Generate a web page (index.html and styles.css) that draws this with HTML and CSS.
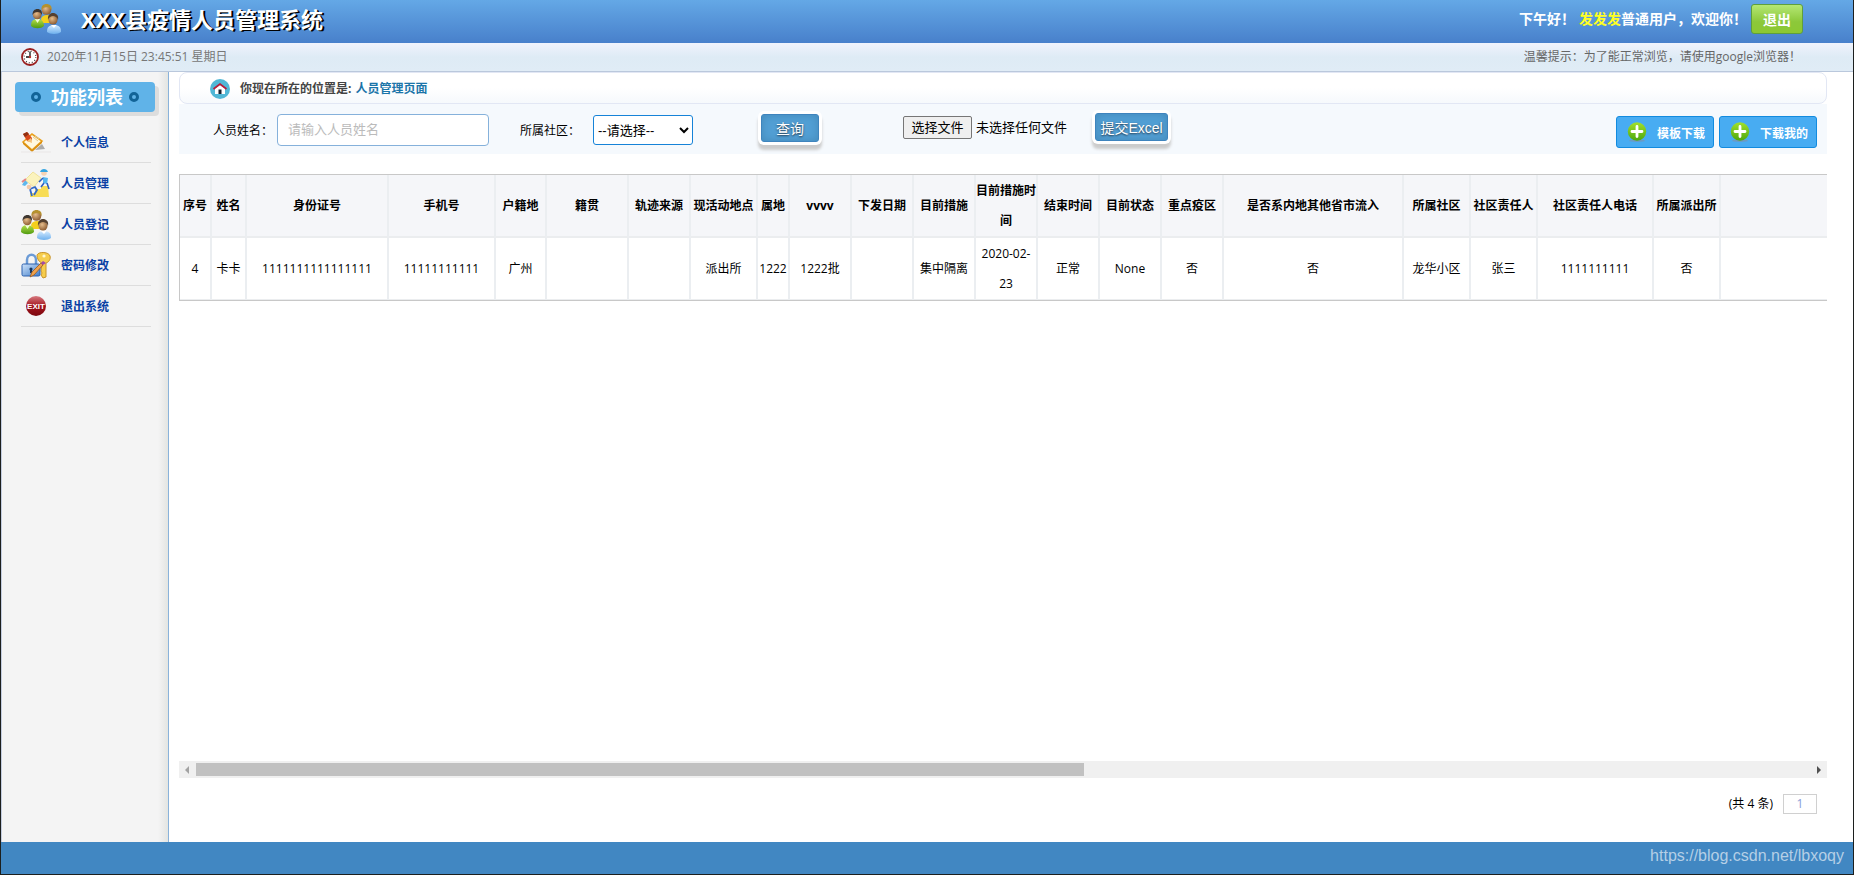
FILE: index.html
```html
<!DOCTYPE html>
<html lang="zh-CN">
<head>
<meta charset="utf-8">
<title>XXX县疫情人员管理系统</title>
<link rel="stylesheet" href="styles.css">
</head>
<body>
<svg class="defs" aria-hidden="true">
  <defs>
    <radialGradient id="face" cx=".4" cy=".35" r=".7"><stop offset="0" stop-color="#e6bd8c"/><stop offset="1" stop-color="#87562c"/></radialGradient>
    <linearGradient id="shirtGreen" x2="0" y2="1"><stop offset="0" stop-color="#b6e04a"/><stop offset="1" stop-color="#4f9a10"/></linearGradient>
    <linearGradient id="shirtBlue" x2="0" y2="1"><stop offset="0" stop-color="#d4ebff"/><stop offset="1" stop-color="#6fb1ee"/></linearGradient>
    <linearGradient id="lockBlue" x2="1" y2="1"><stop offset="0" stop-color="#cfe4fb"/><stop offset="1" stop-color="#3f7cc8"/></linearGradient>
    <linearGradient id="plusGreen" x2="0" y2="1"><stop offset="0" stop-color="#a2e02c"/><stop offset="1" stop-color="#4da80e"/></linearGradient>
    <linearGradient id="exitRed" x2="0" y2="1"><stop offset="0" stop-color="#d77a80"/><stop offset=".5" stop-color="#a3151d"/><stop offset="1" stop-color="#7c070e"/></linearGradient>
    <symbol id="people" viewBox="0 0 30 30">
      <path d="M10 15c1-3 3-4 6-4s5 2 6 5l-4 3h-7z" fill="#f5cf1c"/>
      <circle cx="15.500" cy="6" r="4.800" fill="url(#face)"/>
      <path d="M10.500 6c-.5-4 2-6 5-6s6 2 5 6c-1-2-3-3-5-3s-4 1-5 3z" fill="#b5912f"/>
      <path d="M0 22c0-5 2-7 6-7s7 2 7 7c-3 3-10 3-13 0z" fill="url(#shirtGreen)"/>
      <path d="M4 15l2.500 4L9 15z" fill="#f3ffd8"/>
      <circle cx="6.200" cy="11" r="4.300" fill="url(#face)"/>
      <path d="M1.500 11c0-4 2-6 5-6s5 2 4.500 6c-1-2-2-3-4.500-3s-4 1-5 3z" fill="#3e3630"/>
      <path d="M16 28c0-5 2-7 7-7s7 2 7 7c-3 2.500-11 2.500-14 0z" fill="url(#shirtBlue)"/>
      <path d="M20 21l3 3 2.500-3z" fill="#fff"/>
      <circle cx="22" cy="16" r="4.500" fill="url(#face)"/>
      <path d="M17 16c-.5-5 2-7 5-7s6 2 5 7c-1-3-3-4-5-4s-4 1-5 4z" fill="#55402f"/>
    </symbol>
    <symbol id="plus" viewBox="0 0 20 20">
      <ellipse cx="10" cy="18.700" rx="8" ry="1.200" fill="#6c9ac4"/>
      <circle cx="10" cy="9.500" r="9.200" fill="url(#plusGreen)"/>
      <path d="M10 4.500v10M5 9.500h10" stroke="#fff" stroke-width="2.800" stroke-linecap="round"/>
    </symbol>
  </defs>
</svg>

<header class="topbar">
  <svg class="logo"><use href="#people"/></svg>
  <h1 class="site-name">XXX县疫情人员管理系统</h1>
  <div class="welcome"><span>下午好！</span><span><span class="user">发发发</span>普通用户，欢迎你！</span></div>
  <button class="logout" type="button">退出</button>
</header>

<div class="infobar">
  <svg class="clock" viewBox="0 0 18 18" aria-hidden="true">
    <circle cx="9" cy="9" r="8" fill="#fff" stroke="#9a2020" stroke-width="1.800"/>
    <circle cx="9" cy="9" r="5.800" fill="none" stroke="#444" stroke-width="1.200" stroke-dasharray="1 2.040"/>
    <path d="M9 3.500V9H5" fill="none" stroke="#111" stroke-width="1.300"/><circle cx="9" cy="9" r="1.200" fill="#b33"/>
  </svg>
  <time>2020年11月15日 23:45:51 星期日</time>
  <span class="tip">温馨提示：为了能正常浏览，请使用google浏览器！</span>
</div>

<div class="body">
  <nav class="sidebar">
    <h2 class="menu-title"><i class="ring"></i>功能列表<i class="ring"></i></h2>
    <ul class="menu">
      <li><a href="#info">
        <svg viewBox="0 0 30 30"><path d="M14 22l10-1-3-5z" fill="#999" opacity=".8"/><path d="M2 14L11 6l10 7-10 9z" fill="#fff8df" stroke="#e9a01c" stroke-width="1.600"/><path d="M2 14l9 8 10-9v2l-10 9-9-8z" fill="#d98e10"/><path d="M12 9l5 4M14 8l4 3" stroke="#dcc99a"/><path d="M2 6l4-2 5 6-1 4-4-1z" fill="#d9481c"/><path d="M2 6l4-2 2 2-4 3z" fill="#8f3013"/><path d="M6 13l4-3 1 5z" fill="#f4c478"/><path d="M0 24h30" stroke="#e9e6e6"/></svg>
        个人信息</a></li>
      <li><a href="#people-list">
        <svg viewBox="0 0 30 30"><path d="M9 28v-4h5v-4h6v-3h7l1 11z" fill="#f7dc55"/><path d="M4 11L12 3l8 6-7 9z" fill="#fbf3bd" stroke="#f0e29a"/><path d="M1 16l3-5 3 3-3 3z" fill="#5db8ee"/><path d="M1 13l4-3" stroke="#e58383" stroke-width="2"/><path d="M9 20l5-2 2 3-3 5M9 20l2 7" fill="none" stroke="#3269c9" stroke-width="1.800"/><circle cx="8" cy="18" r="2.300" fill="#f3c9a8"/><circle cx="23" cy="4" r="2.800" fill="#f6d3b4"/><path d="M19 3c1-4 7-4 8 0z" fill="#36a5e2"/><path d="M22 8l5 1-1 6-4-1z" fill="#55b6ef"/><path d="M22 9l-4 4M23 14l-3 4M26 14l2 6" fill="none" stroke="#2e5fc0" stroke-width="1.600"/></svg>
        人员管理</a></li>
      <li><a href="#register"><svg><use href="#people"/></svg>人员登记</a></li>
      <li><a href="#password">
        <svg viewBox="0 0 30 30"><path d="M16 4c2-4 12-3 13 1 1 3-1 6-4 7v14l-3 1-2-3 1-2-1-2 1-8c-3-1-5-4-5-8z" fill="#f6cd4c" stroke="#c9942a"/><circle cx="23" cy="5" r="1.600" fill="#fff6cf"/><path d="M6 14V9c0-7 9-7 9 0v5" fill="none" stroke="#6b9bd6" stroke-width="2.500"/><rect x="1" y="13" width="18" height="12" rx="1.500" fill="url(#lockBlue)" stroke="#2c61ae"/><circle cx="10" cy="18" r="1.600" fill="#16365f"/><path d="M9 18h2v4H9z" fill="#16365f"/><path d="M9 26l2-5 9-9 2 2-9 10z" fill="#f0a24c" stroke="#9a5b1c" stroke-width=".8"/><path d="M20 12l2-2 3 2-3 2z" fill="#a34ba8"/></svg>
        密码修改</a></li>
      <li><a href="#exit">
        <svg viewBox="0 0 30 30"><circle cx="15" cy="14" r="10" fill="url(#exitRed)"/><text class="exit-text" x="15" y="17" text-anchor="middle">EXIT</text></svg>
        退出系统</a></li>
    </ul>
  </nav>

  <main class="content">
    <div class="crumb">
      <svg class="home" viewBox="0 0 20 20" aria-hidden="true"><circle cx="10" cy="10" r="10" fill="#50b7d6"/><path d="M5 9.500L10 6l5 3.500V15H5z" fill="#fff"/><rect x="8.500" y="10.500" width="3" height="4.500" fill="#18202c"/><path d="M3.500 10L10 5l6.500 5" fill="none" stroke="#b91c38" stroke-width="1.700"/></svg>
      <span>你现在所在的位置是:</span>
      <a href="#people-list">人员管理页面</a>
    </div>

    <form class="search">
      <label for="name" class="field-label">人员姓名：</label>
      <input id="name" class="name-input" type="text" placeholder="请输入人员姓名">
      <label for="area" class="field-label area-label">所属社区：</label>
      <select id="area" class="area-select"><option>--请选择--</option></select>
      <button type="button" class="raised query">查询</button>
      <label class="file"><input type="file" class="file-input"><span class="file-btn">选择文件</span>未选择任何文件</label>
      <button type="button" class="raised excel">提交Excel</button>
      <div class="downloads">
        <button type="button" class="download"><svg><use href="#plus"/></svg>模板下载</button>
        <button type="button" class="download"><svg><use href="#plus"/></svg>下载我的</button>
      </div>
    </form>

    <div class="table-wrap" id="records">
      <table class="records">
        <colgroup>
          <col class="c-no"><col class="c-name"><col class="c-id"><col class="c-phone"><col class="c-home"><col class="c-origin"><col class="c-std"><col class="c-wide"><col class="c-no"><col class="c-std"><col class="c-std"><col class="c-std"><col class="c-std"><col class="c-std"><col class="c-std"><col class="c-std"><col class="c-inflow"><col class="c-wide"><col class="c-wide"><col class="c-tel"><col class="c-wide"><col class="c-rest">
        </colgroup>
        <thead><tr><th>序号</th><th>姓名</th><th>身份证号</th><th>手机号</th><th>户籍地</th><th>籍贯</th><th>轨迹来源</th><th>现活动地点</th><th>属地</th><th>vvvv</th><th>下发日期</th><th>目前措施</th><th>目前措施时间</th><th>结束时间</th><th>目前状态</th><th>重点疫区</th><th>是否系内地其他省市流入</th><th>所属社区</th><th>社区责任人</th><th>社区责任人电话</th><th>所属派出所</th><th></th></tr></thead>
        <tbody><tr><td>4</td><td>卡卡</td><td>1111111111111111</td><td>11111111111</td><td>广州</td><td></td><td></td><td>派出所</td><td>1222</td><td>1222批</td><td></td><td>集中隔离</td><td>2020-02-23</td><td>正常</td><td>None</td><td>否</td><td>否</td><td>龙华小区</td><td>张三</td><td>1111111111</td><td>否</td><td></td></tr></tbody>
      </table>
    </div>
    <div class="scrollbar" role="scrollbar" aria-controls="records" aria-orientation="horizontal" aria-valuenow="0">
      <i class="arrow left"></i><div class="track"><div class="thumb"></div></div><i class="arrow right"></i>
    </div>
    <div class="pager"><span>(共 4 条)</span><a href="#page1" class="page">1</a></div>
  </main>
</div>

<footer class="footer">https://blog.csdn.net/lbxoqy</footer>
</body>
</html>
```

FILE: styles.css
```css
* { box-sizing: border-box; }
body {
  margin: 0;
  min-height: 100vh;
  display: flex;
  flex-direction: column;
  border: 1px solid #1c1f1e;
  border-top: 0;
  background: #fff;
  color: #000;
  font: 12px/18px "Open Sans", "Noto Sans CJK SC", sans-serif;
}
button, input, select { font-family: "Liberation Sans", "Noto Sans CJK SC", sans-serif; }
a { text-decoration: none; }
.defs { position: absolute; width: 0; height: 0; }

.topbar {
  display: flex;
  align-items: center;
  height: 43px;
  padding: 0 50px 5px 30px;
  background: linear-gradient(#64a8e6, #4880cb);
  color: #fff;
}
.logo { width: 30px; height: 30px; }
.site-name {
  margin: 0 auto 0 20px;
  font-size: 22px;
  line-height: 32px;
  text-shadow: 2px 1px 0 #000;
}
.welcome { display: flex; gap: 4px; font-size: 14px; font-weight: bold; }
.user { color: #ff2; }
.logout {
  width: 52px;
  height: 30px;
  margin-left: 4px;
  padding: 0;
  border: 1px solid #5f9f3c;
  border-radius: 3px;
  background: linear-gradient(#b4e774, #8cc83a 60%, #8cc832);
  color: #fff;
  font-size: 14px;
  font-weight: bold;
}

.infobar {
  display: flex;
  align-items: center;
  height: 29px;
  padding: 0 52px 0 20px;
  border-bottom: 1px solid #bac8dc;
  background: linear-gradient(#f0f3fc, #deebf5 50%, #e0ecf6);
  color: #777;
}
.clock { width: 18px; height: 18px; margin-right: 8px; }
.tip { margin-left: auto; color: #666; }

.body { flex: 1; display: flex; min-height: 0; }
.sidebar {
  flex: none;
  width: 168px;
  padding: 10px 13px;
  border-left: 1px solid #c3cde0;
  border-right: 1px solid #8ab2da;
  background: linear-gradient(to right, #f4f4f4 156px, #ececeb 161px, #e3e5e2);
}
.menu-title {
  display: flex;
  align-items: center;
  justify-content: center;
  gap: 8px;
  width: 140px;
  height: 30px;
  margin: 0;
  border-radius: 4px;
  background: #60b3e8;
  box-shadow: 4px 4px 0 #ddd;
  color: #fff;
  font-size: 18px;
  line-height: 30px;
}
.ring { width: 10px; height: 10px; border: 3px solid #126498; border-radius: 50%; }
.ring:first-child { margin-right: 2px; }
.ring:last-child { margin-left: -2px; }
.menu { margin: 10px 4px 10px 6px; padding: 0; list-style: none; }
.menu li { height: 41px; border-bottom: 1px solid #ddd; }
.menu a {
  display: flex;
  align-items: center;
  gap: 10px;
  height: 40px;
  padding-top: 2px;
  color: #0a41a4;
  font-weight: bold;
}
.menu svg { width: 30px; height: 30px; }
.exit-text { fill: #fff; font: bold 8px "Liberation Sans", sans-serif; }

.content { flex: 1; min-width: 0; display: flex; flex-direction: column; padding: 0 26px 28px 10px; }
.crumb {
  display: flex;
  align-items: center;
  gap: 4px;
  height: 32px;
  padding: 2px 0 0 30px;
  border: 1px solid #e2e7f4;
  border-radius: 8px;
  background: linear-gradient(#fff 50%, #f6f9fc);
  color: #444;
  font-weight: bold;
}
.crumb a { color: #1b75a9; }
.home { width: 20px; height: 20px; margin-right: 6px; }

.search {
  display: flex;
  align-items: flex-start;
  min-height: 50px;
  padding: 9px 10px 0 34px;
  background: #f5f9fd;
}
.field-label { flex: none; width: 60px; margin: 9px 4px 0 0; }
.area-label { margin-left: 31px; margin-right: 13px; }
.name-input {
  width: 212px;
  height: 32px;
  margin-top: 1px;
  padding: 0 10px 2px;
  border: 1px solid #85b1db;
  border-radius: 4px;
  background: #fff;
  font-size: 13px;
}
.name-input::placeholder { color: #bbb; }
.area-select {
  width: 100px;
  height: 30px;
  margin-top: 2px;
  border: 1px solid #1683d8;
  border-radius: 3px;
  background: #fff;
  color: #000;
  font-size: 13px;
}
.raised {
  height: 28px;
  padding: 0;
  border: 1px solid #3f84bd;
  border-radius: 3px;
  background: #529fd4;
  box-shadow: 0 0 0 3px #fff, 0 5px 3px 3px #ccc, inset 0 0 8px #4389b9;
  color: #fff;
  font-size: 14px;
  text-shadow: 0 1px 2px #234;
}
.query { width: 58px; margin: 1px 0 0 68px; }
.excel { width: 73px; margin-left: 28px; }
.file {
  display: flex;
  align-items: center;
  gap: 4px;
  margin: 3px 0 0 84px;
  font: 13px/21px "Liberation Sans", "Noto Sans CJK SC", sans-serif;
}
.file-input { position: absolute; width: 1px; height: 1px; opacity: 0; }
.file-btn { width: 69px; border: 1px solid #767676; border-radius: 2px; background: #efefef; text-align: center; }
.downloads { display: flex; gap: 5px; margin: 3px 0 0 auto; }
.download {
  display: flex;
  align-items: center;
  gap: 10px;
  width: 98px;
  height: 32px;
  padding: 0 0 0 10px;
  border: 1px solid #128bdf;
  border-radius: 3px;
  background: #48acf2;
  color: #fff;
  font-size: 12px;
  font-weight: bold;
}
.download svg { width: 20px; height: 20px; }

.table-wrap { flex: 1; margin-top: 20px; overflow: hidden; }
.records {
  width: 2997px;
  table-layout: fixed;
  border: 1px solid #c8c8c8;
  border-collapse: separate;
  border-spacing: 0;
  line-height: 30px;
  text-align: center;
}
.records th, .records td {
  height: 62px;
  padding: 1px 0 0;
  border-right: 2px solid #ebeef1;
  border-bottom: 2px solid #ebedef;
}
.records th { background: #f5f6f9; }
.records td { border-bottom-width: 1px; }
.c-no { width: 32px; }
.c-name { width: 35px; }
.c-id { width: 142px; }
.c-phone { width: 107px; }
.c-home { width: 51px; }
.c-origin { width: 82px; }
.c-std { width: 62px; }
.c-wide { width: 67px; }
.c-inflow { width: 180px; }
.c-tel { width: 116px; }

.scrollbar { display: flex; align-items: center; height: 17px; padding: 0 6px; background: #f0f0f0; }
.arrow { border: 4px solid transparent; }
.left { border-left: 0; border-right-color: #a3a3a3; }
.right { border-right: 0; border-left-color: #505050; }
.track { flex: 1; margin: 0 7px; }
.thumb { width: 55%; height: 13px; background: #c1c1c1; }

.pager { display: flex; align-items: center; justify-content: flex-end; gap: 10px; margin-top: 16px; padding-right: 10px; }
.page { width: 34px; border: 1px solid #d0d0d0; color: #8a9bd8; text-align: center; }

.footer {
  height: 32px;
  padding-right: 9px;
  background: #4187c2;
  color: #b5cfe6;
  font: 16px/28px "Liberation Sans", sans-serif;
  text-align: right;
}
```
